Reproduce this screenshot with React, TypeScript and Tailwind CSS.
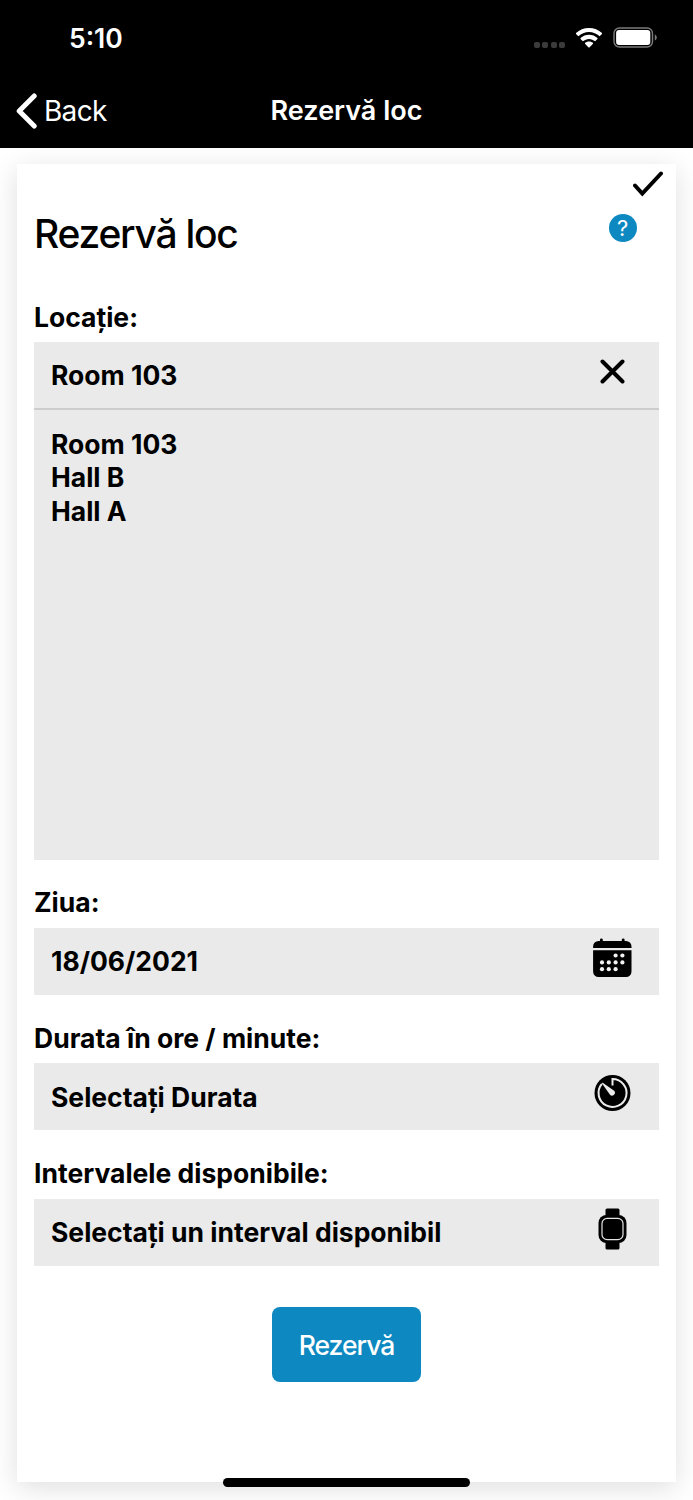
import React, { useState } from 'react'

const rooms = ['Room 103', 'Hall B', 'Hall A']

const WifiIcon = () => (
  <svg width="28" height="22" viewBox="0 0 28 22" fill="white">
    <path d="M14 1C19 1 23.600 2.900 27 6.100L27 7L24.600 9.300C21.800 6.700 18 5.100 14 5.100C10 5.100 6.200 6.700 3.400 9.300L1 7L1 6.100C4.400 2.900 9 1 14 1Z" />
    <path d="M14 7.800C17.200 7.800 20.200 9 22.500 11.100L22.500 12L20.100 14.300C18.400 12.800 16.300 11.900 14 11.900C11.700 11.900 9.600 12.800 7.900 14.300L5.500 12L5.500 11.100C7.800 9 10.800 7.800 14 7.800Z" />
    <path d="M14 14.500C15.500 14.500 16.900 15 18 16L18 16.700L14.400 20.500L13.600 20.500L10 16.700L10 16C11.100 15 12.500 14.500 14 14.500Z" />
  </svg>
)

const BatteryIcon = () => (
  <svg width="44" height="22" viewBox="0 0 44 22">
    <rect x="1" y="1" width="38.500" height="19" rx="5.500" fill="none" stroke="#7b7b7b" strokeWidth="1.400" />
    <rect x="3.100" y="3.100" width="34.200" height="14.800" rx="3" fill="white" />
    <path d="M41.800 7.500C44.400 8.500 44.400 12.500 41.800 13.500Z" fill="#7b7b7b" />
  </svg>
)

const CalendarIcon = () => (
  <svg width="40" height="40" viewBox="-0.500 0 40 40">
    <path d="M7.500 3V1.800a1.400 1.400 0 0 1 2.800 0V3h19V1.800a1.400 1.400 0 0 1 2.800 0V3h1.400a5.500 5.500 0 0 1 5.500 5.500V10H.600V8.500A5.500 5.500 0 0 1 6.100 3z" />
    <path d="M.600 12.300H39V33.500a5.500 5.500 0 0 1-5.500 5.500H6.100a5.500 5.500 0 0 1-5.500-5.500z" />
    <g fill="#f2f2f2">
      <circle cx="23.100" cy="17.500" r="2.100" />
      <circle cx="29.900" cy="17.500" r="2.100" />
      <circle cx="9.500" cy="24.400" r="2.100" />
      <circle cx="16.300" cy="24.400" r="2.100" />
      <circle cx="23.100" cy="24.400" r="2.100" />
      <circle cx="29.900" cy="24.400" r="2.100" />
      <circle cx="9.500" cy="31.200" r="2.100" />
      <circle cx="16.300" cy="31.200" r="2.100" />
      <circle cx="23.100" cy="31.200" r="2.100" />
    </g>
  </svg>
)

const TimerIcon = () => (
  <svg width="37" height="36" viewBox="-0.500 0 37 36">
    <circle cx="18" cy="18" r="18" />
    <path d="M18 10.500V4A14 14 0 1 1 7.400 8.900" fill="none" stroke="#ebebeb" strokeWidth="2" />
    <path d="M8.600 7.900C8 7.400 7.200 8.200 7.700 8.800L15.500 19.700A2.700 2.700 0 1 0 19.600 15.800Z" fill="#ebebeb" />
  </svg>
)

const WatchIcon = () => (
  <svg width="29" height="42" viewBox="-0.500 0 29 42">
    <rect x="7" y="0.500" width="14" height="41" rx="1.500" />
    <rect x="0" y="7" width="28" height="28" rx="8" />
    <rect x="3.500" y="10.300" width="21" height="21.400" rx="5.200" fill="none" stroke="#e5e5e5" strokeWidth="1.200" />
  </svg>
)

interface FieldProps {
  label: string
  value: string
  icon: React.ReactNode
}

const Field: React.FC<FieldProps> = ({ label, value, icon }) => (
  <div className="mb-[24.500px]">
    <div className="h-11 pt-[2.500px] text-[26.500px] leading-[32px] font-bold">{label}</div>
    <button className="flex h-[67px] w-full items-center justify-between bg-[#eaeaea] pr-[27px] pl-[17px] text-left text-[26.500px] font-bold">
      <span className="pt-0.5">{value}</span>
      <span className="flex w-10 justify-center pb-[7px]">{icon}</span>
    </button>
  </div>
)

const App: React.FC = () => {
  const [room, setRoom] = useState('Room 103')
  const [open, setOpen] = useState(true)

  return (
    <div className="relative h-[1500px] w-[693px] overflow-hidden bg-white font-['Inter','Liberation_Sans',sans-serif] text-black">
      {/* Status bar + navigation */}
      <header className="h-[147.500px] bg-black text-white">
        <div className="flex h-[74px] items-center justify-between pr-9 pl-[69px]">
          <span className="pt-1 text-[26.500px] font-semibold">5:10</span>
          <div className="flex items-center pt-0.5">
            <div className="mt-3.5 mr-2.5 flex gap-[2.500px]">
              <span className="size-[6px] rounded-[2px] bg-[#3b3b3b]" />
              <span className="size-[6px] rounded-[2px] bg-[#3b3b3b]" />
              <span className="size-[6px] rounded-[2px] bg-[#3b3b3b]" />
              <span className="size-[6px] rounded-[2px] bg-[#3b3b3b]" />
            </div>
            <WifiIcon />
            <span className="ml-2.5"><BatteryIcon /></span>
          </div>
        </div>
        <div className="grid h-[73px] grid-cols-3 items-center">
          <button className="flex items-center gap-[7px] pl-4 text-[28px] tracking-[-0.700px]">
            <svg width="21" height="36" viewBox="0 0 21 36" fill="none" stroke="white" strokeWidth="5" strokeLinecap="round" strokeLinejoin="round">
              <path d="M18.200 3L3.200 18L18.200 33" />
            </svg>
            Back
          </button>
          <h1 className="pt-0.5 text-center text-[27px] font-semibold">Rezervă loc</h1>
        </div>
      </header>

      {/* Booking card */}
      <main className="mx-[17px] mt-[16.500px] flex h-[1318px] flex-col bg-white px-[17px] shadow-[0_6px_26px_rgba(0,0,0,0.13)]">
        <div className="flex h-[134px] justify-between">
          <h2 className="pt-[46px] text-[39px] leading-[48px] font-medium tracking-[-1.250px]">Rezervă loc</h2>
          <div className="flex flex-col items-end pt-[7px]">
            <svg className="-mr-1" width="30" height="26" viewBox="0 0 30 26" fill="none" stroke="black" strokeWidth="4" strokeLinecap="round">
              <path d="M2 14.500L9.300 22.500L28 2.500" strokeLinejoin="miter" />
            </svg>
            <span className="mt-[17px] mr-[22.500px] flex size-7 items-center justify-center rounded-full bg-[#0d88c0] text-[22px] leading-none text-white">
              ?
            </span>
          </div>
        </div>

        <div className="mb-[23.500px]">
          <div className="h-11 pt-[2.500px] text-[26.500px] leading-[32px] font-bold">Locație:</div>
          <div className="h-[518px] bg-[#eaeaea] text-[26.500px] font-bold">
            <div className="flex h-[68px] items-center justify-between border-b-2 border-[#cdcdcd] pr-[34px] pl-[17px]">
              <span className="pt-0.5">{room}</span>
              <button className="pb-[7px]" onClick={() => setOpen(!open)}>
                <svg width="25" height="25" viewBox="0 0 25 25" stroke="black" strokeWidth="4" strokeLinecap="round">
                  <path d="M2.500 2.500L22.500 22.500M22.500 2.500L2.500 22.500" />
                </svg>
              </button>
            </div>
            {open && (
              <ul className="px-[17px] pt-[17.500px] leading-[33.500px]">
                {rooms.map((item) => (
                  <li key={item} className="cursor-pointer" onClick={() => setRoom(item)}>
                    {item}
                  </li>
                ))}
              </ul>
            )}
          </div>
        </div>

        <Field label="Ziua:" value="18/06/2021" icon={<CalendarIcon />} />
        <Field label="Durata în ore / minute:" value="Selectați Durata" icon={<TimerIcon />} />
        <Field label="Intervalele disponibile:" value="Selectați un interval disponibil" icon={<WatchIcon />} />

        <button className="mt-[17px] h-[75px] w-[149px] self-center rounded-lg bg-[#0d88c0] pt-0.5 text-[26.500px] font-medium tracking-[-1px] text-white">
          Rezervă
        </button>
      </main>

      {/* Home indicator */}
      <div className="absolute bottom-[13.500px] left-[223px] h-[8.500px] w-[247px] rounded-full bg-black" />
    </div>
  )
}

export default App
